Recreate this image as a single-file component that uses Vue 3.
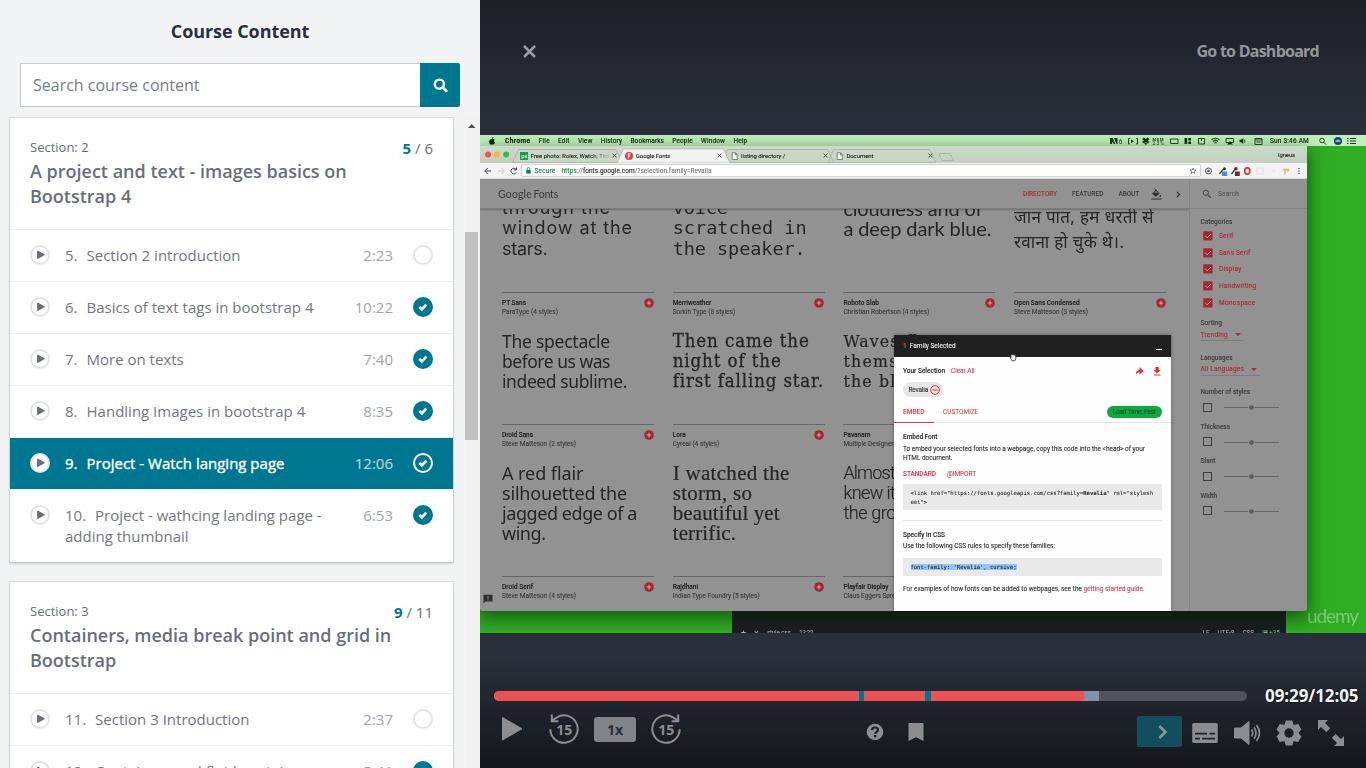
<script setup>
const sections = [
  {
    n: 2, title: 'A project and text - images basics on Bootstrap 4', done: 5, total: 6,
    items: [
      { n: 5, t: 'Section 2 introduction', d: '2:23' },
      { n: 6, t: 'Basics of text tags in bootstrap 4', d: '10:22', done: true },
      { n: 7, t: 'More on texts', d: '7:40', done: true },
      { n: 8, t: 'Handling Images in bootstrap 4', d: '8:35', done: true },
      { n: 9, t: 'Project - Watch langing page', d: '12:06', done: true, active: true },
      { n: 10, t: 'Project - wathcing landing page - adding thumbnail', d: '6:53', done: true }
    ]
  },
  {
    n: 3, title: 'Containers, media break point and grid in Bootstrap', done: 9, total: 11,
    items: [
      { n: 11, t: 'Section 3 Introduction', d: '2:37' },
      { n: 12, t: 'Containers and fluid container', d: '5:41', done: true }
    ]
  }
]
const menus = [['Chrome', 25.5], ['File', 11], ['Edit', 11.5], ['View', 14.5], ['History', 21.5], ['Bookmarks', 33.5], ['People', 20.5], ['Window', 24], ['Help', 14]]
const tabs = [
  { t: 'Free photo: Rolex, Watch, Tim', w: 79, k: 'px' },
  { t: 'Google Fonts', w: 34.5, k: 'gf' },
  { t: 'listing directory /', w: 44, k: 'doc' },
  { t: 'Document', w: 27, k: 'doc' }
]
const rows = [
  { cls: 'r0', cards: [
    { f: 'f-work', l: [['through the', 109], ['window at the', 131], ['stars.', 45.5]] },
    { f: 'f-mono', l: [['voice', 55], ['scratched in', 134], ['the speaker.', 133]] },
    { f: 'f-ral', l: [['cloudless and of', 139], ['a deep dark blue.', 148]] },
    { f: 'f-hin', l: [['जान पात, हम धरती से', 141], ['रवाना हो चुके थे।.', 112]] }
  ] },
  { cls: 'r1', cards: [
    { n: 'PT Sans', nw: 24, a: 'ParaType (4 styles)', aw: 56, f: 'f-pt', l: [['The spectacle', 108], ['before us was', 108], ['indeed sublime.', 125]] },
    { n: 'Merriweather', nw: 38.5, a: 'Sorkin Type (8 styles)', aw: 62.5, f: 'f-mer', l: [['Then came the', 137], ['night of the', 109], ['first falling star.', 151]] },
    { n: 'Roboto Slab', nw: 35.5, a: 'Christian Robertson (4 styles)', aw: 86, f: 'f-slab', l: [['Waves flung', 109], ['themselves at', 127], ['the blue evening.', 159]] },
    { n: 'Open Sans Condensed', nw: 65.5, a: 'Steve Matteson (3 styles)', aw: 74, f: 'f-cond', l: [['Almost before we', 128], ['knew it, we had', 120]] }
  ] },
  { cls: 'r2', cards: [
    { n: 'Droid Sans', nw: 31, a: 'Steve Matteson (2 styles)', aw: 74, f: 'f-droid', l: [['A red flair', 81.5], ['silhouetted the', 125], ['jagged edge of a', 135], ['wing.', 43.5]] },
    { n: 'Lora', nw: 13, a: 'Cyreal (4 styles)', aw: 46.5, f: 'f-lora', l: [['I watched the', 117], ['storm, so', 79.5], ['beautiful yet', 107], ['terrific.', 63.5]] },
    { n: 'Pavanam', nw: 27, a: 'Multiple Designers', aw: 53.5, f: 'f-pav', l: [['Almost before', 101], ['knew it, we had', 112], ['the ground.', 85]] },
    { n: '', a: '', l: [] }
  ] },
  { cls: 'r3', cards: [
    { n: 'Droid Serif', nw: 31, a: 'Steve Matteson (4 styles)', aw: 74, l: [] },
    { n: 'Rajdhani', nw: 25.5, a: 'Indian Type Foundry (5 styles)', aw: 87, l: [] },
    { n: 'Playfair Display', nw: 45, a: 'Claus Eggers Sørensen', aw: 66, l: [] },
    { n: '', a: '', l: [] }
  ] }
]
const cats = [['Serif', 14.5], ['Sans Serif', 31.5], ['Display', 22.5], ['Handwriting', 37.5], ['Monospace', 36.5]]
const sliders = [['Number of styles', 49.5], ['Thickness', 29.5], ['Slant', 15], ['Width', 16.5]]

// Tracks a single-line label so that it spans exactly the given width.
const vFit = {
  mounted(el, { value }) {
    if (!value) return
    const n = Array.from(el.textContent).length
    const w = el.getBoundingClientRect().width
    el.style.letterSpacing = ((value - w) / n) + 'px'
  }
}
</script>

<template>
  <div class="app">
    <aside class="side">
      <h1><span v-fit="138.500">Course Content</span></h1>
      <div class="search">
        <div class="field">Search course content</div>
        <button class="go">
          <svg width="15" height="15" viewBox="0 0 16 16"><circle cx="6.8" cy="6.6" r="4.9" fill="none" stroke="#fff" stroke-width="2.6" /><path d="M10.4 10.2l3.8 3.6" stroke="#fff" stroke-width="2.8" stroke-linecap="round" /></svg>
        </button>
      </div>
      <div class="scroller">
        <div class="cards">
          <section v-for="s in sections" :key="s.n" class="card">
            <header>
              <div class="sec"><span>Section: {{ s.n }}</span><span class="cnt"><b>{{ s.done }}</b> / {{ s.total }}</span></div>
              <h2>{{ s.title }}</h2>
            </header>
            <div v-for="i in s.items" :key="i.n" class="item" :class="{ active: i.active }">
              <span class="play"><svg width="10" height="12" viewBox="0 0 10 12"><path d="M1.600 2v7.600l6.800-3.800z" fill="#686f7a" stroke="#686f7a" stroke-width="1" stroke-linejoin="round" /></svg></span>
              <span class="name"><span class="num">{{ i.n }}.</span>{{ i.t }}</span>
              <span class="dur">{{ i.d }}</span>
              <span class="chk" :class="{ on: i.done }"><svg v-if="i.done" width="12" height="10" viewBox="0 0 12 10"><path d="M2.300 4.900l2.500 2.400 4.600-4.700" fill="none" stroke="#fff" stroke-width="2.700" /></svg></span>
            </div>
          </section>
        </div>
        <div class="bar"><svg width="15" height="17" viewBox="0 0 15 17"><path d="M3 11h7.500L6.700 7z" fill="#505050" /></svg><div class="thumb"></div></div>
      </div>
    </aside>

    <main class="player">
      <div class="top">
        <svg width="16" height="16" viewBox="0 0 16 16"><path d="M2 2l11 11M13 2L2 13" stroke="#9c9fa2" stroke-width="2.500" /></svg>
        <span v-fit="122.5">Go to Dashboard</span>
      </div>

      <div class="video">
        <div class="menubar">
          <svg class="apple" width="8" height="8" viewBox="0 0 8 8"><path d="M4 2.300C5.200 1.500 6.400 2 6.700 2.700 5.700 3.400 5.800 4.900 7 5.400 6.400 7.200 5.400 8 4.200 7.400 2.600 8 1.300 6.700 1.100 4.900 1 2.700 2.500 1.700 4 2.300zM4 2C4 .8 4.700.2 5.400 0 5.400 1 4.900 1.700 4 2z" fill="#12240f" /></svg>
          <span v-for="m in menus" :key="m[0]" v-fit="m[1]" class="menu">{{ m[0] }}</span>
          <svg class="status" width="153" height="10" viewBox="1110 135 153 10">
            <g fill="#1b3318">
              <path d="M1110 143v-6h2.700l2.600 6h-1.500l-1.100-2.600-1 2.600zM1114 137h3.500v6h-1z" />
              <text x="1118.800" y="142.500" font-size="6.500" font-family="Roboto">6</text>
              <path d="M1142 138l2-1.400 1.800 1.400 1.800-1.400 2 1.400-1.900 1.500 1.900 1.400-2 1.300-1.800-1.300-1.800 1.300-2-1.300 1.900-1.400zM1144 142.700l1.800-1 1.800 1-1.800 1.100z" />
              <text x="1152.500" y="139.600" font-size="4" font-family="Roboto" font-weight="700" textLength="11">MEM</text>
              <text x="1152.500" y="143.800" font-size="5" font-family="Roboto" textLength="11.500">23%</text>
              <path d="M1184.500 137h2.700v6h-2.700zM1188.300 137h2.700v2.500h-2.700zM1188.300 140.400h2.700v2.600h-2.700zM1239.500 138.800h1.700l2-1.800v6l-2-1.800h-1.700zM1230 140l3 3.500h-6zM1131 138.500l3 1.700-3 1.700z" />
            </g>
            <g fill="none" stroke="#1b3318" stroke-width=".9">
              <path d="M1130 137.500h-1.500v5.500h1.500M1136 137.500h1.500v5.500h-1.500M1170.500 138h7.500v4.500h-7.500zM1198.500 137.500h6v5.500h-6zM1201.500 137.500v2.500M1226 137.500h7.500v4h-7.500zM1244.300 138.500q1.200 1.700 0 3.200M1255 137.500h7v6h-7zM1255 139h7M1256.500 141h4" />
              <path d="M1211.500 138.700q4-3 8 0M1213 140.400q2.500-2 5 0M1214.500 142q1-.9 2 0" stroke-width="1.100" />
            </g>
          </svg>
          <span v-fit="39" class="menu clock">Sun 3:46 AM</span>
          <svg class="ext" width="38" height="10" viewBox="1319 135 38 10"><circle cx="1322" cy="139.500" r="2.300" fill="none" stroke="#1b3318" stroke-width=".9" /><path d="M1323.700 141.200l2.300 2.300M1347 137.500h1.500M1350 137.500h6M1347 140h1.500M1350 140h6M1347 142.500h1.500M1350 142.500h6" stroke="#1b3318" stroke-width="1" /><circle cx="1338" cy="140" r="4" fill="#26406e" /><path d="M1335 140.500q3-4 6 0-3 1-6 0" fill="#5ec9d8" /></svg>
        </div>

        <div class="desktop">
          <div class="editor"><span class="big">+</span><span class="big">×</span><span v-fit="24">style.css</span><span v-fit="14">13:22</span><i></i><span>LF</span><span v-fit="17">UTF-8</span><span v-fit="11.500">CSS</span><span class="git">▣+35</span></div>
          <div class="water"><span v-fit="51">udemy</span></div>

          <div class="win">
            <div class="strip">
              <svg class="shape" width="480" height="17" viewBox="480 146 480 17">
                <circle cx="488" cy="154.500" r="3" fill="#fc4e4d" /><circle cx="497" cy="154.500" r="3" fill="#fdb32a" /><circle cx="506.200" cy="154.500" r="3" fill="#2fc23c" />
                <g fill="#c9d5c7" stroke="#9faa9d" stroke-width=".7"><path d="M828 162.500l5.500-13h96l6.500 13zM722 162.500l5.500-13h100l6.500 13zM512.500 162.500l6-13h97.500l6.500 13z" /></g>
                <path d="M617 163l6.500-14h100l6.500 14z" fill="#f1f3f0" stroke="#a5ada4" stroke-width=".6" />
                <path d="M939 153.500h11l3.500 7h-10.500q-1 0-1.500-1z" fill="#c7d4c4" stroke="#9daa9b" stroke-width=".7" />
              </svg>
              <div v-for="t in tabs" :key="t.t" class="tab">
                <svg v-if="t.k === 'px'" width="8" height="8" viewBox="0 0 8 8"><rect width="8" height="8" fill="#16a04a" /><text x="1.200" y="6" font-size="6" fill="#fff" font-family="Roboto">px</text></svg>
                <svg v-else-if="t.k === 'gf'" width="8" height="8" viewBox="0 0 8 8"><circle cx="4" cy="4" r="4" fill="#ee3a43" /><path d="M2.800 2h2.700M3.300 2v4.300M3.300 4h1.800" stroke="#fff" stroke-width="1" /></svg>
                <svg v-else width="8" height="8" viewBox="0 0 8 8"><path d="M1.200.8h3.300l1.800 1.900v4.800H1.200zM4.400.8v2h2" fill="#f3f6f2" stroke="#545a53" stroke-width=".7" /></svg>
                <span class="tl" :class="{ fade: t.k === 'px' }"><span v-fit="t.w">{{ t.t }}</span></span>
                <svg class="x" width="5" height="5" viewBox="0 0 5 5"><path d="M.6.6l3.800 3.800M4.400.6L.6 4.400" stroke="#444" stroke-width=".9" /></svg>
              </div>
              <span class="who" v-fit="17">Igneus</span>
            </div>
            <div class="tools">
              <svg width="36" height="16" viewBox="484 163 36 16" fill="none" stroke-width="1"><path d="M491 171h-6M487.700 168l-3 3 3 3" stroke="#444" /><path d="M498 171h6M501.500 168l3 3-3 3" stroke="#ccc" /><path d="M516 169.400a2.800 2.800 0 1 0 .2 3M516.500 167.500v2.500h-2.500" stroke="#444" /></svg>
              <div class="omni">
                <svg width="5" height="7" viewBox="0 0 5 7"><rect x=".3" y="3" width="4.400" height="3.600" fill="#0a8043" /><path d="M1.200 3V1.800a1.300 1.300 0 0 1 2.600 0V3" fill="none" stroke="#0a8043" stroke-width=".8" /></svg>
                <span class="sure" v-fit="21">Secure</span>
                <span class="url" v-fit="150"><i>https</i><u>://</u>fonts.google.com<u>/?selection.family=Revalia</u></span>
                <svg class="star" width="8" height="8" viewBox="0 0 8 8"><path d="M4 1l.9 2h2L5.300 4.400l.6 2.100L4 5.300 2.100 6.500l.6-2.100L1.100 3h2z" fill="none" stroke="#555" stroke-width=".7" /></svg>
              </div>
              <svg width="100" height="16" viewBox="1202 163 100 16"><circle cx="1208.500" cy="171" r="3" fill="none" stroke="#555" stroke-width="1" /><circle cx="1208.500" cy="171" r="1.300" fill="#555" /><path d="M1219.500 174l4.500-5.500M1231.500 174l4-5.500" stroke="#444" stroke-width="1.300" /><circle cx="1224.500" cy="168.700" r="1.500" fill="#333" /><circle cx="1236" cy="168.700" r="1.700" fill="#6b2a34" /><rect x="1222" y="171.500" width="5.200" height="4.500" fill="#3b8df0" /><rect x="1235" y="171.500" width="4.800" height="4.500" fill="#7c2433" /><ellipse cx="1247.300" cy="171" rx="2.600" ry="3.100" fill="none" stroke="#ea3323" stroke-width="1.600" /><rect x="1257" y="168" width="6" height="6" fill="none" stroke="#e0e0e0" /><circle cx="1273.500" cy="171" r="2" fill="#e8e8e8" /><path d="M1283 169.500h6M1285 169v5.500M1288 169v2.500" stroke="#eeae62" stroke-width="1.500" /><path d="M1299 168v1.200M1299 170.400v1.200M1299 172.800v1.200" stroke="#444" stroke-width="1.200" /></svg>
            </div>

            <div class="page">
              <div class="content">
                <div class="nav">
                  <span class="logo"><span v-fit="34">Google</span> <em v-fit="24.5">Fonts</em></span>
                  <span class="lnk red" v-fit="34">DIRECTORY</span>
                  <span class="lnk" v-fit="31.500">FEATURED</span>
                  <span class="lnk" v-fit="20.500">ABOUT</span>
                  <svg width="33" height="14" viewBox="1150 187 33 14"><path d="M1152 193.500l4-3.700 3.500 3.700-3.700 3.500z" fill="#333" /><path d="M1154.300 192.800l1.800-1.700 1.800 1.700z" fill="#929292" /><path d="M1154.500 189l3 2.500M1151 199h10.500" stroke="#333" stroke-width="1" /><circle cx="1160.300" cy="196" r=".9" fill="#333" /><path d="M1176.800 191.800l2.700 2.700-2.700 2.700" fill="none" stroke="#333" stroke-width="1.200" /></svg>
                </div>
                <div class="grid">
                  <div v-for="r in rows" :key="r.cls" class="row" :class="r.cls">
                    <div v-for="(c, i) in r.cards" :key="i" class="fc">
                      <div v-if="c.n !== undefined" class="meta">
                        <div><p class="fn"><span v-fit="c.nw">{{ c.n }}</span></p><p><span v-fit="c.aw">{{ c.a }}</span></p></div>
                        <svg width="10" height="10" viewBox="0 0 10 10"><circle cx="5" cy="5" r="4.800" fill="#a52733" /><path d="M2.700 5h4.600M5 2.700v4.600" stroke="#d0a5a9" stroke-width="1.100" /></svg>
                      </div>
                      <div class="spec" :class="c.f"><p v-for="l in c.l" :key="l[0]"><span v-fit="l[1]">{{ l[0] }}</span></p></div>
                    </div>
                  </div>
                </div>
                <svg class="fb" width="10" height="10" viewBox="0 0 10 10"><path d="M.5.800h9v6.800H2.500L.5 9.500z" fill="#2e2e2e" /><path d="M5 2v2.600M5 5.300v1.200" stroke="#929292" stroke-width="1" /></svg>
              </div>
              <div class="filter">
                <div class="find"><svg width="10" height="10" viewBox="0 0 10 10"><circle cx="3.800" cy="3.800" r="2.600" fill="none" stroke="#444" stroke-width="1" /><path d="M5.800 5.800l3 3" stroke="#444" stroke-width="1.200" /></svg><span v-fit="21">Search</span></div>
                <div class="cats">
                  <p class="lab"><span v-fit="32">Categories</span></p>
                  <p v-for="c in cats" :key="c[0]" class="cat"><svg width="10" height="10" viewBox="0 0 10 10"><rect x=".2" y=".2" width="9.400" height="9.400" rx=".8" fill="#a52733" /><path d="M2.200 4.800l2 2 3.800-3.800" fill="none" stroke="#c3a3a5" stroke-width="1" /></svg><span v-fit="c[1]">{{ c[0] }}</span></p>
                </div>
                <div class="dd"><p class="lab"><span v-fit="21.500">Sorting</span></p><p class="val"><span v-fit="27.500">Trending</span><b></b></p></div>
                <div class="dd"><p class="lab"><span v-fit="32">Languages</span></p><p class="val"><span v-fit="43.500">All Languages</span><b></b></p></div>
                <div v-for="s in sliders" :key="s[0]" class="sl"><p class="lab"><span v-fit="s[1]">{{ s[0] }}</span></p><div class="ctl"><i></i><div class="track"><b></b></div></div></div>
              </div>

              <div class="pop">
                <div class="ph"><b>1</b><span v-fit="46">Family Selected</span><i></i></div>
                <div class="sel"><b v-fit="42">Your Selection</b><span class="pr" v-fit="23.500">Clear All</span>
                  <svg width="26" height="12" viewBox="1136 364 26 12"><path d="M1135.500 374.500q.5-4 4-4.800v-2.700l4.300 4-4.300 3.500v-2.300q-2 0-4 2.300z" transform="translate(0 -1)" fill="#e8303f" /><path d="M1155.500 366h3.300v3h2l-3.700 3.600-3.700-3.600h2.100z" fill="#e8303f" /><path d="M1153.800 374h6.700" stroke="#e8303f" stroke-width="1.200" /></svg>
                </div>
                <div class="chip"><span v-fit="19.500">Revalia</span><svg width="10" height="10" viewBox="0 0 10 10"><circle cx="5" cy="5" r="4.300" fill="none" stroke="#e0303f" stroke-width="1" /><path d="M2.400 5h5.200" stroke="#e0303f" /></svg></div>
                <div class="pt"><div class="embed"><span v-fit="21.500">EMBED</span></div><span class="cus" v-fit="35.500">CUSTOMIZE</span><div class="fast"><span v-fit="43">Load Time: Fast</span></div></div>
                <div class="body">
                  <p class="h1"><b v-fit="34.500">Embed Font</b></p>
                  <p class="l1"><span v-fit="242">To embed your selected fonts into a webpage, copy this code into the &lt;head&gt; of your</span></p>
                  <p class="l2"><span v-fit="49.500">HTML document.</span></p>
                  <p class="std"><b v-fit="33">STANDARD</b><span v-fit="29">@IMPORT</span></p>
                  <div class="code c1"><p><span v-fit="242.500">&lt;link href="https://fonts.googleapis.com/css?family=<b>Revalia</b>" rel="stylesh</span></p><p><span v-fit="16.500">eet"&gt;</span></p></div>
                  <p class="h2"><b v-fit="42">Specify in CSS</b></p>
                  <p class="l3"><span v-fit="152">Use the following CSS rules to specify these families:</span></p>
                  <div class="code c2"><p><span class="hl" v-fit="106">font-family: 'Revalia', cursive;</span></p></div>
                  <p class="l4"><span v-fit="180.500">For examples of how fonts can be added to webpages, see the&nbsp;</span><span class="pr" v-fit="61">getting started guide.</span></p>
                </div>
                <svg class="cursor" width="8" height="9" viewBox="0 0 8 9"><path d="M1 4.500l1 .3V2.500l1-1.200 1 .9.900-.7.900.7 1 .3v3.300l-1 2H3z" fill="#eee" stroke="#333" stroke-width=".8" /></svg>
              </div>
            </div>
          </div>
        </div>
      </div>

      <div class="controls">
        <div class="prog">
          <div class="trackbar"><div class="buf"></div><div class="fill"></div><i class="m1"></i><i class="m2"></i></div>
          <span class="time"><span v-fit="93.500">09:29/12:05</span></span>
        </div>
        <div class="btns">
          <svg width="22" height="26" viewBox="0 0 22 26"><path d="M1.500 1.500v22.500L21 12.800z" fill="#8b8d91" stroke="#8b8d91" stroke-width="1" stroke-linejoin="round" /></svg>
          <svg class="rw" width="32" height="32" viewBox="0 0 32 32"><path d="M2.300 16.200A13.700 13.700 0 1 0 9 4.300l-4.500 2.800M3.800 1.600v6.600h6.600" fill="none" stroke="#8b8d91" stroke-width="2" /><text x="16.300" y="21.500" text-anchor="middle" font-size="14" font-family="Open Sans" font-weight="700" fill="#8b8d91">15</text></svg>
          <div class="rate">1x</div>
          <svg class="fw" width="32" height="32" viewBox="0 0 32 32"><path d="M29.700 16.200A13.700 13.700 0 1 1 23 4.300l4.500 2.800M28.200 1.600v6.600h-6.600" fill="none" stroke="#8b8d91" stroke-width="2" /><text x="16.300" y="21.500" text-anchor="middle" font-size="14" font-family="Open Sans" font-weight="700" fill="#8b8d91">15</text></svg>
          <svg class="help" width="18" height="18" viewBox="0 0 18 18"><circle cx="9" cy="9" r="8.300" fill="#8b8d91" /><path d="M6 7Q6.200 4.500 9 4.500T12 7Q12 8.300 10.500 9 9.200 9.600 9.200 10.800" fill="none" stroke="#1d2027" stroke-width="2.200" /><rect x="8" y="12" width="2.400" height="2.200" fill="#1d2027" /></svg>
          <svg class="bm" width="16" height="20" viewBox="0 0 16 20"><path d="M.5 1.800q0-.8.8-.8h13.400q.8 0 .8.8V19L8 15.300.5 19z" fill="#8b8d91" /></svg>
          <div class="next"><svg width="12" height="16" viewBox="0 0 12 16"><path d="M2.300 2l6.200 6-6.200 6" fill="none" stroke="#8f9699" stroke-width="2.500" /></svg></div>
          <svg class="cc" width="26" height="22" viewBox="0 0 26 22"><rect x=".2" y="1" width="25.500" height="20" rx="1.500" fill="#8b8d91" /><path d="M3 11.700h12M17.500 11.700h5.500M3 16.700h5M10 16.700h13" stroke="#20232a" stroke-width="1.700" /></svg>
          <svg class="vol" width="27" height="26" viewBox="0 0 27 26"><path d="M.5 8h6.500L15 1.500v23L7 18H.5z" fill="#8b8d91" stroke="#8b8d91" stroke-linejoin="round" /><path d="M17.500 9.500q2.400 3.500 0 7M20 7.300q4 5.700 0 11.400M22.500 5q6 8 0 16" fill="none" stroke="#8b8d91" stroke-width="1.700" /></svg>
          <svg class="gear" width="26" height="26" viewBox="-13 -13 26 26"><g fill="#8b8d91"><path v-for="a in [0, 60, 120]" :key="a" :transform="`rotate(${a})`" d="M-3.200-12.500h6.400l1.600 5v15l-1.600 5h-6.400l-1.600-5v-15z" /><circle r="9.300" /></g><circle r="4.700" fill="#1c1f26" /></svg>
          <svg class="ex" width="28" height="28" viewBox="0 0 28 28"><path d="M1 1h10L8 4l5.200 5.200-3.800 3.800L4 8l-3 3zM27 27H17l3-3-5.200-5.200 3.800-3.800L24 20l3-3z" fill="#8b8d91" /></svg>
        </div>
      </div>
    </main>
  </div>
</template>

<style>
body { margin: 0; overflow: hidden; }
</style>

<style scoped>
* { box-sizing: border-box; }
p, h1, h2 { margin: 0; }
svg { display: block; flex: none; }
.app { display: flex; width: 1366px; height: 768px; overflow: hidden; font-family: "Open Sans", sans-serif; }

.side { width: 480px; height: 768px; background: #f2f3f5; display: flex; flex-direction: column; }
h1 { height: 63px; line-height: 62px; text-align: center; font-size: 18px; font-weight: 700; color: #29303b; }
.search { display: flex; height: 44px; margin: 0 20px; }
.field { flex: 1; background: #fff; border: 1px solid #cacbcc; border-right: 0; padding-left: 12px; line-height: 42px; font-size: 16px; color: #76808a; }
.go { width: 40px; border: 0; padding: 0; background: #007791; border-radius: 0 2px 2px 0; display: flex; align-items: center; justify-content: center; }
.go svg { margin-top: 1px; }
.scroller { flex: 1; min-height: 0; margin-top: 10px; display: flex; justify-content: space-between; overflow: hidden; }
.cards { width: 443px; margin: 1px 0 0 10px; }
.bar { width: 15px; background: #f1f1f1; }
.thumb { width: 13px; height: 208px; margin: 98px 0 0; background: #c1c1c1; }
.card { background: #fff; margin-bottom: 20px; box-shadow: 0 0 1px 1px rgba(20, 23, 28, .1), 0 2px 2px 0 rgba(20, 23, 28, .12); }
header { height: 112px; padding: 19px 20px 0; border-bottom: 1px solid #eff0f1; }
.sec { display: flex; justify-content: space-between; height: 22px; line-height: 21px; font-size: 13px; color: #686f7a; }
.cnt { font-size: 15px; line-height: 23px; }
.cnt b { color: #007791; }
h2 { width: 370px; font-size: 18px; line-height: 25px; font-weight: 600; color: #686f7a; }
.item { display: flex; padding: 15px 20px; font-size: 15px; line-height: 21px; color: #73777f; border-bottom: 1px solid #eff0f1; }
.item:last-child { border-bottom: 0; }
.play, .chk { width: 20px; height: 20px; border: 2px solid #e4e4e8; border-radius: 50%; background: #fff; flex: none; display: flex; align-items: center; justify-content: center; }
.play svg { margin-left: 2px; }
.name { flex: 1; margin-left: 15px; padding-right: 20px; }
.num { margin-right: 9px; }
.dur { color: #a1a5ab; margin-right: 20px; }
.chk.on { border-color: #007791; background: #007791; }
.active, .active:not(:last-child) { background: #007791; color: #fff; }
.active .name { font-weight: 400; -webkit-text-stroke: .35px #fff; }
.active .dur { color: #b0d3dc; -webkit-text-stroke: .2px #b0d3dc; }
.active .chk { border-color: #fff; }

.player { width: 886px; height: 768px; background: linear-gradient(#1d2027 0, #29303b 135px, #29303b 655px, #14171c 768px); display: flex; flex-direction: column; }
.top { height: 135px; padding: 40px 47px 0 42px; display: flex; justify-content: space-between; font-size: 16px; line-height: 23px; font-weight: 700; color: #94979b; }
.top svg { margin-top: 4px; }

.video { height: 498px; background: #2fae24; overflow: hidden; font-family: Roboto, sans-serif; filter: blur(.25px); }
.menubar { height: 11px; background: #c0f0b9; display: flex; align-items: center; padding-left: 8px; color: #10200e; font-size: 6.500px; line-height: 10px; white-space: nowrap; }
.apple { margin-right: 9px; }
.menu { margin-right: 8.300px; -webkit-text-stroke: .15px; flex: none; }
.menu:nth-child(2) { font-weight: 700; }
.status { margin-left: auto; }
.clock { margin: 0 10px 0 7px; }
.ext { margin-right: 9px; }
.desktop { position: relative; height: 487px; }
.editor { position: absolute; left: 252px; top: 465px; width: 554px; height: 22px; background: #1b1e22; display: flex; color: #b5b9bd; font-size: 6.500px; line-height: 10px; padding: 17px 6px 0 9px; gap: 8px; white-space: nowrap; overflow: hidden; }
.big { font-size: 9px; }
.editor i { flex: 1; }
.git { color: #58c878; }
.water { position: absolute; left: 827px; top: 457px; font: 400 19px/26px Lato, sans-serif; color: #7cca76; white-space: nowrap; }
.win { position: absolute; left: 0; top: 0; width: 827px; height: 465px; box-shadow: 0 6px 18px 2px rgba(0, 30, 0, .55); border-radius: 0 0 3px 3px; overflow: hidden; }
.strip { position: relative; height: 17px; background: linear-gradient(#c9dcc6, #c4cdc3); display: flex; padding: 0 12px 0 40px; font-size: 6px; }
.shape { position: absolute; left: 0; top: 0; }
.tab { position: relative; width: 105.300px; display: flex; align-items: center; padding-top: 2px; color: #222; -webkit-text-stroke: .1px; white-space: nowrap; }
.tl { width: 80px; margin-left: 2.500px; overflow: hidden; }
.fade { -webkit-mask-image: linear-gradient(90deg, #000 75%, transparent); }
.tab .x { margin-left: 1.500px; }
.who { margin-left: auto; line-height: 17px; }
.tools { height: 16px; background: #f3f3f3; display: flex; align-items: center; padding: 0 5px 0 4px; border-bottom: 1px solid #d8d8d8; }
.omni { height: 13px; width: 680px; margin-left: 1px; background: #fff; border: 1px solid #d0d0d0; border-radius: 2px; display: flex; align-items: center; padding: 0 3px 0 4px; font-size: 6.500px; -webkit-text-stroke: .1px; white-space: nowrap; }
.tools > svg:last-child { margin-left: 1px; }
.sure { color: #0a8043; margin: 0 6px 0 3.500px; }
.url { color: #222; }
.url i { font-style: normal; color: #0a8043; }
.url u { text-decoration: none; color: #777; }
.star { margin-left: auto; }

.page { position: relative; height: 432px; background: #929292; display: flex; }
.content { position: relative; width: 710px; display: flex; flex-direction: column; overflow: hidden; border-right: 1px solid #858585; }
.nav { height: 30px; flex: none; display: flex; align-items: center; border-bottom: 1px solid #7b7b7b; box-shadow: 0 1px 2px rgba(0, 0, 0, .25); padding: 1px 6px 0 18px; font-size: 6.500px; font-weight: 500; color: #3a3a3a; white-space: nowrap; }
.logo { font-size: 10.500px; font-family: Lato, sans-serif; font-weight: 400; margin-right: auto; color: #3a3a3a; display: flex; gap: 1.500px; }
.logo em { font-style: normal; font-weight: 400; }
.lnk { margin-right: 15px; }
.nav > svg { margin-left: -4px; }
.red { color: #b02434; }
.grid { flex: 1; min-height: 0; overflow: hidden; position: relative; padding-left: 22px; }
.row { display: grid; grid-template-columns: repeat(4, 152px); column-gap: 18.700px; }
.r0 { height: 82.500px; }
.r0 .spec { margin-top: -11px; }
.r1 { height: 132px; }
.r2 { height: 152.500px; }
.meta { height: 39px; border-top: 1px solid #666; display: flex; justify-content: space-between; padding-top: 5px; font-size: 6.500px; line-height: 9.200px; color: #3a3a3a; -webkit-text-stroke: .1px; white-space: nowrap; }
.meta > div { padding-top: 1px; }
.meta svg { margin: 0 .5px 0 0; }
.fn { font-weight: 500; color: #222; }
.spec { font-size: 19px; line-height: 20.300px; color: #262626; white-space: nowrap; }
.f-work { font-family: Inter, sans-serif; font-size: 18px; }
.f-mono { font-family: "DejaVu Sans Mono", monospace; font-size: 18.500px; }
.f-ral { font-family: Lato, sans-serif; font-size: 20px; }
.f-hin { font-family: "Noto Sans", sans-serif; font-size: 17px; line-height: 25px; }
.r0 .f-hin { margin-top: -5px; }
.f-pt { font-family: "Noto Sans", sans-serif; font-size: 17.500px; }
.f-mer { font-family: "DejaVu Serif Condensed", "DejaVu Serif", serif; font-stretch: condensed; font-size: 18.500px; -webkit-text-stroke: .3px; }
.f-slab { font-family: "DejaVu Serif Condensed", "DejaVu Serif", serif; font-stretch: condensed; font-size: 17.500px; -webkit-text-stroke: .2px; }
.f-cond { font-family: "Open Sans", sans-serif; font-size: 17px; }
.f-droid { font-family: "Noto Sans", sans-serif; font-size: 18px; }
.f-lora { font-family: "Liberation Serif", serif; font-size: 21px; -webkit-text-stroke: .2px; }
.f-pav { font-family: Roboto, sans-serif; font-size: 18px; font-weight: 300; -webkit-text-stroke: .2px; }
.fb { position: absolute; left: 3px; bottom: 7px; }

.filter { flex: 1; font-size: 6.500px; color: #444; -webkit-text-stroke: .1px; white-space: nowrap; }
.filter p { display: flex; align-items: center; }
.find { height: 30px; border-bottom: 1px solid #868686; display: flex; align-items: center; padding: 1px 0 0 11.500px; gap: 6.500px; color: #555; }
.lab { font-weight: 500; height: 10px; }
.cats { padding: 8px 0 0 10.500px; height: 109px; }
.cats .lab { margin-bottom: 1px; }
.cat { height: 16.600px; gap: 6.500px; color: #b02434; padding-left: 2px; }
.dd { padding-left: 10.500px; height: 34.600px; }
.val { height: 13px; color: #b02434; width: max-content; border-bottom: 1px solid #7c7c7c; }
.val span { padding-top: 1px; }
.val b { margin: 1px 3px 0 7px; border: 3px solid transparent; border-top-color: #b02434; border-bottom: 0; }
.sl { padding-left: 10.500px; height: 34.600px; }
.ctl { display: flex; align-items: center; height: 20px; padding-left: 2px; }
.ctl i { width: 9px; height: 9px; border: 1px solid #3d3d3d; }
.track { width: 55px; height: 1px; background: #666; margin: 1px 0 0 12px; display: flex; align-items: center; justify-content: center; }
.track b { width: 5px; height: 5px; border-radius: 50%; background: #5c5c5c; outline: .5px solid #929292; flex: none; }

.pop { position: absolute; left: 414px; top: 156px; width: 277px; height: 276px; background: #fefefe; font-size: 6.500px; color: #2c2c2c; -webkit-text-stroke: .08px; white-space: nowrap; box-shadow: 0 0 4px rgba(0, 0, 0, .35); }
.ph { height: 22px; background: #202020; color: #eee; display: flex; align-items: center; padding: 0 9px; }
.ph b { color: #e0583a; font-weight: 500; margin-right: 3px; }
.ph i { margin: 7px 0 0 auto; width: 6px; height: 1px; background: #fff; }
.sel { height: 26px; display: flex; align-items: center; padding: 1px 9px 0; }
.pop b { font-weight: 500; }
.sel svg { margin-left: auto; }
.pr { color: #d93848; }
.sel .pr { margin-left: 6px; }
.chip { width: 40px; height: 15px; margin: -1px 0 0 9px; border-radius: 8px; background: #e6e6e6; display: flex; align-items: center; padding-left: 5.500px; gap: 2px; }
.pt { height: 26px; border-bottom: 1px solid #e4e4e4; display: flex; align-items: center; color: #d94858; font-weight: 500; }
.embed { width: 39.500px; height: 26px; line-height: 31px; padding-left: 9px; border-bottom: 1px solid #c9405a; }
.cus { margin: 5px 0 0 9.500px; font-weight: 400; }
.fast { margin: 4px 9.500px 0 auto; width: 54.500px; height: 12px; line-height: 13px; border-radius: 6px; background: #0cab3f; color: #174c26; text-align: center; font-weight: 400; }
.body { padding: 10px 9.500px 0 9px; }
.h1, .h2, .l1, .l2, .l3, .l4 { line-height: 9px; }
.l1 { margin-top: 3px; }
.std { margin-top: 6px; line-height: 10px; color: #d93848; display: flex; gap: 11px; }
.code { background: #e9e9e9; font-family: "DejaVu Sans Mono", monospace; font-size: 5.600px; padding-left: 7.500px; }
.c1 { height: 26px; margin: 5px 0 9.500px; padding-top: 5px; line-height: 8.500px; }
.h2 { border-top: 1px solid #e4e4e4; padding-top: 10px; }
.l3 { margin-top: 2.500px; }
.c2 { height: 18px; margin: 7px 0 9px; padding-top: 5px; line-height: 8px; }
.hl { background: #8fc6fa; }
.code b { font-weight: 700; }
.cursor { position: absolute; left: 115px; top: 18px; }

.controls { flex: 1; padding-top: 52px; }
.prog { display: flex; align-items: center; height: 22px; padding-left: 14px; }
.trackbar { position: relative; width: 753px; height: 10px; border-radius: 5px; background: #50545c; overflow: hidden; }
.buf, .fill, .m1, .m2 { position: absolute; top: 0; left: 0; height: 10px; }
.buf { width: 605px; background: #8292aa; }
.fill { width: 591px; background: #ec5252; border-radius: 5px; }
.m1 { left: 365px; width: 5px; background: #007791; }
.m2 { left: 431px; width: 6px; background: #007791; }
.time { margin-left: 18px; color: #f3f4f5; font-size: 17px; font-weight: 700; line-height: 22px; text-shadow: 0 0 2px #000; white-space: nowrap; }
.btns { display: flex; align-items: center; height: 50px; padding-left: 21px; }
.btns > svg:first-child { margin-top: -6px; }
.rw { margin: -6px 0 0 24.500px; }
.rate { width: 42px; height: 25px; margin: -6px 0 0 14.500px; border-radius: 3px; background: #818388; color: #29303b; font-size: 14px; font-weight: 700; line-height: 26px; text-align: center; }
.fw { margin: -6px 0 0 14px; }
.help { margin: 0 0 0 184px; }
.bm { margin: 0 0 0 24px; }
.next { width: 45px; height: 31px; margin: -1px 0 0 213px; background: #124e5e; border-radius: 2px; display: flex; align-items: center; padding-left: 19.500px; }
.cc { margin: 1px 0 0 10px; }
.vol { margin: 1px 0 0 15.500px; }
.gear { margin: 1px 0 0 15px; }
.ex { margin: 1px 0 0 15.500px; }
</style>
